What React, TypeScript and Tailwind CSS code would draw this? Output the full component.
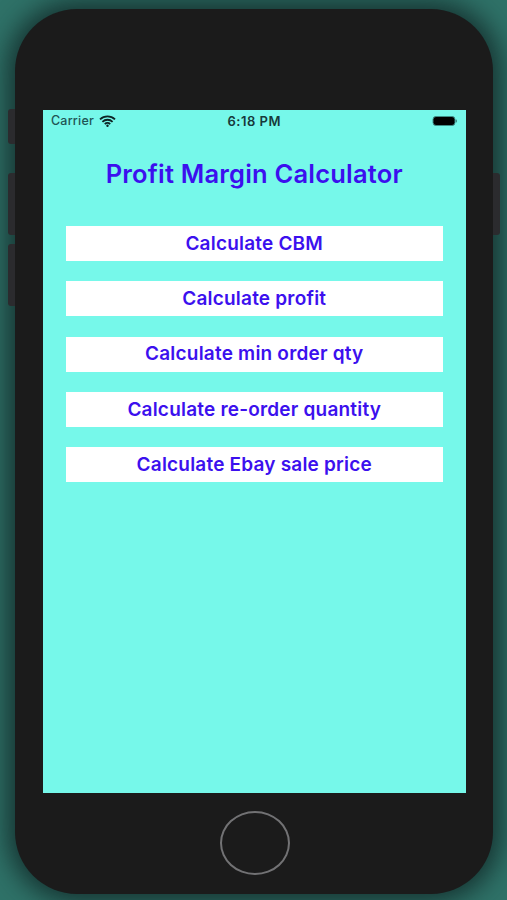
import React from 'react';

const labels = [
  'Calculate CBM',
  'Calculate profit',
  'Calculate min order qty',
  'Calculate re-order quantity',
  'Calculate Ebay sale price',
];

const App: React.FC = () => {
  return (
    <div className="w-[507px] h-[900px] overflow-hidden bg-[#2f7268] pt-[9px] pl-[15px] font-['Inter','Liberation_Sans',sans-serif]">
      <div className="relative w-[478px] h-[885px] rounded-[62px] bg-[#1b1b1b] pt-[101px] pl-[28px] shadow-[0_0_26px_8px_rgba(15,35,35,0.8)]">
        {/* side buttons */}
        <div className="absolute left-[-7px] top-[100px] w-[7px] h-[35px] rounded-l-[3px] bg-[#2b2b2e]" />
        <div className="absolute left-[-7px] top-[164px] w-[7px] h-[62px] rounded-l-[3px] bg-[#2b2b2e]" />
        <div className="absolute left-[-7px] top-[235px] w-[7px] h-[62px] rounded-l-[3px] bg-[#2b2b2e]" />
        <div className="absolute right-[-7px] top-[164px] w-[7px] h-[62px] rounded-r-[3px] bg-[#2b2b2e]" />

        {/* screen */}
        <div className="w-[422.5px] h-[683px] bg-[#76f8ea] flex flex-col">
          <div className="h-[22px] px-[8px] flex items-center justify-between relative">
            <div className="flex items-center gap-[5px] relative z-10">
              <span className="text-[12.5px] leading-none font-medium text-[#1f5455] tracking-[0.2px]">Carrier</span>
              <svg width="17" height="12" viewBox="0 0 17 12" className="block">
                <path d="M1 4.4a10.8 10.8 0 0 1 15 0M3.4 6.8a7.4 7.4 0 0 1 10.2 0M5.8 9.1a3.9 3.9 0 0 1 5.4 0" fill="none" stroke="#0d2424" strokeWidth="1.8" />
                <circle cx="8.5" cy="10.7" r="1.2" fill="#0d2424" />
              </svg>
            </div>
            <span className="absolute left-0 right-0 text-center text-[13px] leading-none font-semibold text-[#17393a] tracking-[0.5px]">6:18 PM</span>
            <svg width="26" height="12" viewBox="0 0 26 12" className="block relative z-10">
              <rect x="1" y="1.5" width="22" height="9" rx="3" fill="#000" stroke="#3f8f88" strokeWidth="1" />
              <rect x="23.6" y="4.5" width="1.4" height="3" rx="0.7" fill="#3f8f88" />
            </svg>
          </div>

          <div className="mt-[27px] text-center text-[25.5px] leading-[30px] tracking-[0.2px] font-semibold text-[#3c10ee]">
            Profit Margin Calculator
          </div>

          <div className="mt-[37px] mx-[23px] flex flex-col gap-[20.3px]">
            {labels.map((label) => (
              <button key={label} className="h-[35px] pt-[1px] bg-white text-[19px] tracking-[0.2px] font-semibold text-[#3c10ee]">
                {label}
              </button>
            ))}
          </div>
        </div>

        {/* home button */}
        <div className="mt-[18px] ml-[177px] w-[70px] h-[64px] rounded-[50%] border-[2.5px] border-[#727274]" />
      </div>
    </div>
  );
};

export default App;
